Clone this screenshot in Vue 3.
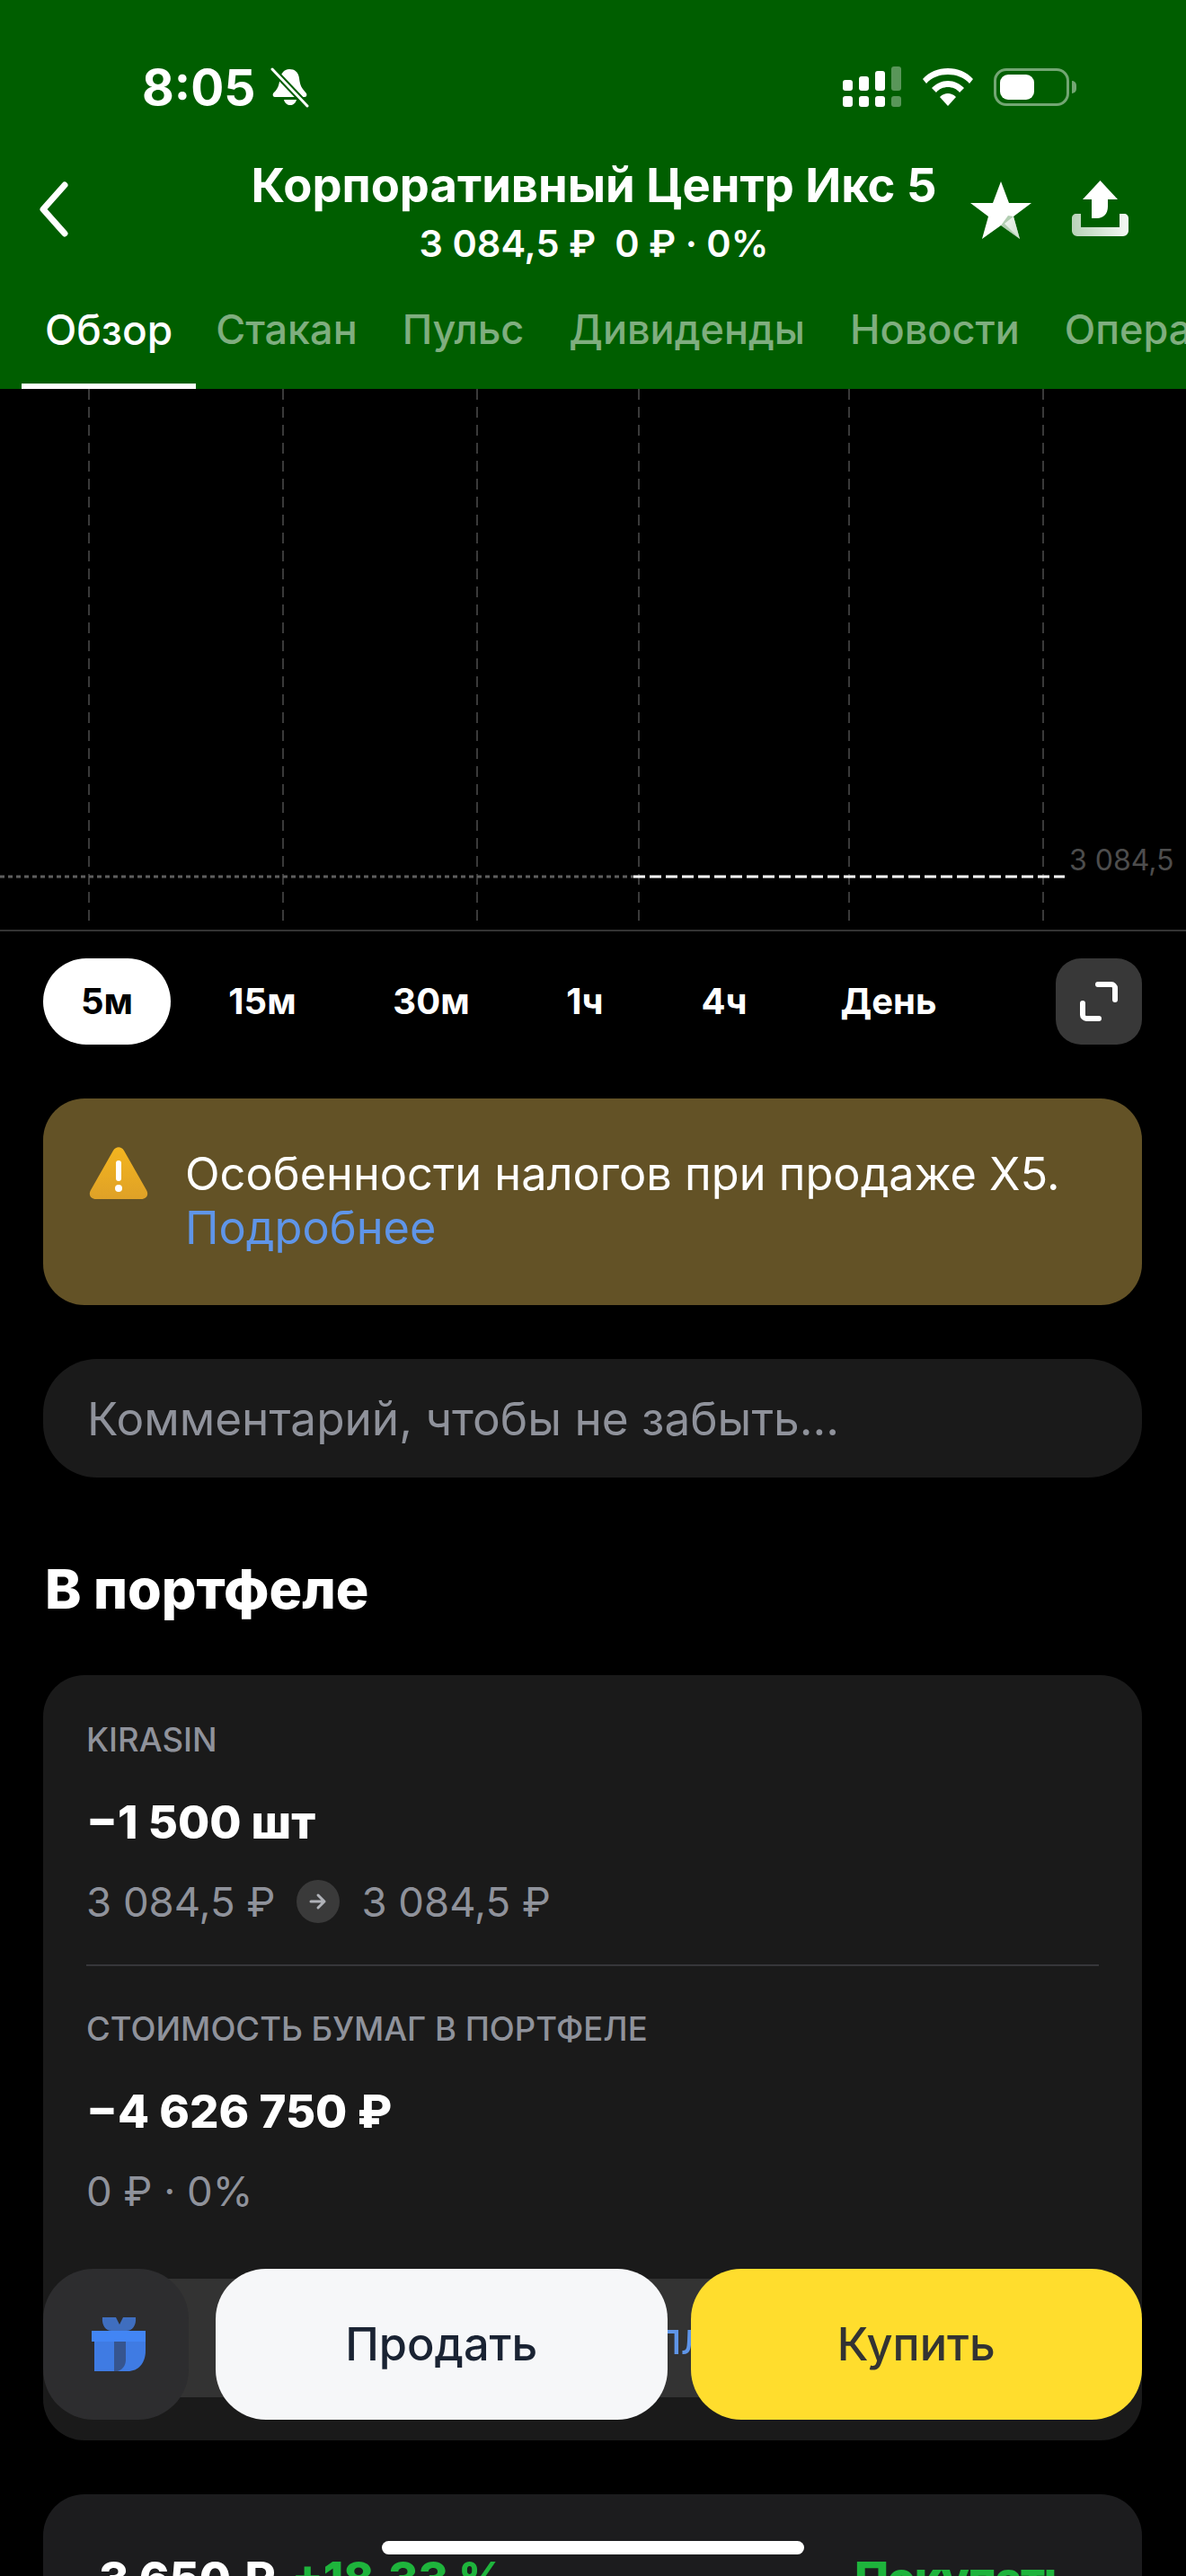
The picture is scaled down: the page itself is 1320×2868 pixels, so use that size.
<template>
  <div class="screen">
    <header class="top">
      <div class="status">
        <div class="status-left">
          <span class="time">8:05</span>
          <svg class="bell" viewBox="0 0 46 46" width="46" height="46">
            <path d="M22 3c6 0 10 3 11 10 1 8 2 10 8 17 1 2 0 4-2 4H6c-2 0-3-2-2-4 4-4 6-7 7-13 1-9 5-14 11-14Z" fill="#fff" />
            <path d="M16 37h14c-1 4-4 6-7 6s-6-2-7-6Z" fill="#fff" />
            <path d="M3 3l39 41" stroke="#005e00" stroke-width="7" />
            <path d="M3 3l39 41" stroke="#fff" stroke-width="3" stroke-linecap="round" />
          </svg>
        </div>
        <div class="status-right">
          <svg viewBox="0 0 66 46" width="66" height="46">
            <g fill="#fff">
              <rect x="0" y="15" width="11" height="12" rx="3" />
              <rect x="18" y="11" width="11" height="16" rx="3" />
              <rect x="36" y="5" width="11" height="22" rx="3" />
              <rect x="0" y="33" width="11" height="12" rx="3" />
              <rect x="18" y="33" width="11" height="12" rx="3" />
              <rect x="36" y="33" width="11" height="12" rx="3" />
            </g>
            <g fill="#fff" opacity="0.35">
              <rect x="54" y="0" width="11" height="27" rx="3" />
              <rect x="54" y="33" width="11" height="12" rx="3" />
            </g>
          </svg>
          <svg viewBox="0 0 58 44" width="58" height="44">
            <path d="M29 1c11 0 21 4 28 12l-4 5C47 11 38 8 29 8S11 11 5 18l-4-5C8 5 18 1 29 1Z" fill="#fff" />
            <path d="M29 15c7 0 13 3 18 8l-5 5c-3-4-8-6-13-6s-10 2-13 6l-5-5c5-5 11-8 18-8Z" fill="#fff" />
            <path d="M29 29c3 0 6 1 9 4l-9 10-9-10c3-3 6-4 9-4Z" fill="#fff" />
          </svg>
          <div class="battery">
            <div class="battery-body"><div class="battery-fill"></div></div>
            <div class="battery-cap"></div>
          </div>
        </div>
      </div>

      <div class="nav">
        <svg class="back" viewBox="0 0 36 62" width="36" height="62">
          <path d="M30 4 6 31l24 27" fill="none" stroke="#fff" stroke-width="7" stroke-linecap="round" stroke-linejoin="round" />
        </svg>
        <div class="nav-title">
          <div class="name">Корпоративный Центр Икс 5</div>
          <div class="quote">3 084,5 ₽&nbsp;&nbsp;0 ₽ · 0%</div>
        </div>
        <svg class="star" viewBox="0 0 68 64" width="68" height="64">
          <defs>
            <linearGradient id="starShade" x1="0" y1="0" x2="1" y2="1">
              <stop offset="0" stop-color="#fff" stop-opacity="0.85" />
              <stop offset="1" stop-color="#fff" stop-opacity="0.35" />
            </linearGradient>
          </defs>
          <path d="M34 0l9 24h25L48 39l7 25-21-15-21 15 7-25L0 24h25Z" fill="#fff" />
          <path d="M34 49l21 15-7-25-6-1Z" fill="#005e00" opacity="0.3" />
          <path d="M38 47l17 17-7-25Z" fill="url(#starShade)" />
        </svg>
        <svg class="share" viewBox="0 0 63 62" width="63" height="62">
          <defs>
            <linearGradient id="trayShade" x1="0" y1="0" x2="1" y2="0">
              <stop offset="0" stop-color="#fff" stop-opacity="0.72" />
              <stop offset="1" stop-color="#fff" stop-opacity="0.96" />
            </linearGradient>
          </defs>
          <path d="M31.5 0 51 21H40v8c0 8-5 13-12 13h-6V21H12Z" fill="#fff" />
          <path d="M0 42c0-3 2-5 5-5h5v15h43V37h5c3 0 5 2 5 5v14c0 3-3 6-6 6H6c-3 0-6-3-6-6Z" fill="url(#trayShade)" />
        </svg>
      </div>

      <nav class="tabs">
        <span v-for="(tab, i) in tabs" :key="tab" class="tab" :class="{ active: i === 0 }">{{ tab }}</span>
      </nav>
    </header>

    <section class="chart">
      <svg class="chart-lines" viewBox="0 0 1320 602" width="1320" height="602">
        <path
          v-for="x in gridX"
          :key="x"
          :d="`M${x} 0V597`"
          stroke="#3a3a3a"
          stroke-width="2"
          stroke-dasharray="12 8"
        />
        <path d="M0 543H705" stroke="#5e5e5e" stroke-width="3" stroke-dasharray="5 4" />
        <path d="M705 543H1185" stroke="#fff" stroke-width="3" stroke-dasharray="13 5" />
      </svg>
      <span class="chart-price">3 084,5</span>
    </section>

    <div class="periods">
      <span v-for="(p, i) in periods" :key="p.label" class="period" :class="{ active: i === 0 }" :style="{ width: p.width + 'px' }">{{ p.label }}</span>
      <div class="expand">
        <svg viewBox="0 0 44 44" width="44" height="44">
          <path d="M21 3h15c2 0 4 2 4 4v13M4 24v13c0 2 2 4 4 4h14" fill="none" stroke="#fff" stroke-width="6" stroke-linecap="round" />
        </svg>
      </div>
    </div>

    <div class="notice">
      <svg class="warn" viewBox="0 0 66 58" width="66" height="58">
        <defs>
          <linearGradient id="warnFill" x1="0" y1="0" x2="0" y2="1">
            <stop offset="0" stop-color="#f3b51f" />
            <stop offset="1" stop-color="#dfa127" />
          </linearGradient>
        </defs>
        <path d="M27 4c3-5 9-5 12 0l25 44c3 5 0 10-6 10H8c-6 0-9-5-6-10Z" fill="url(#warnFill)" />
        <rect x="30" y="15" width="6" height="23" rx="3" fill="#fff" />
        <circle cx="33" cy="46" r="4" fill="#fff" />
      </svg>
      <p class="notice-text">Особенности налогов при продаже Х5.<br /><span class="link">Подробнее</span></p>
    </div>

    <div class="comment">Комментарий, чтобы не забыть...</div>

    <h2 class="section-title">В портфеле</h2>

    <div class="card position">
      <div class="label">KIRASIN</div>
      <div class="big">−1 500 шт</div>
      <div class="prices">
        <span>3 084,5 ₽</span>
        <span class="arrow">
          <svg viewBox="0 0 24 24" width="24" height="24">
            <path d="M4 12h15M12 5l7 7-7 7" fill="none" stroke="#b0b2b8" stroke-width="3" stroke-linecap="round" stroke-linejoin="round" />
          </svg>
        </span>
        <span>3 084,5 ₽</span>
      </div>
      <div class="divider"></div>
      <div class="label">СТОИМОСТЬ БУМАГ В ПОРТФЕЛЕ</div>
      <div class="big">−4 626 750 ₽</div>
      <div class="prices">0 ₽ · 0%</div>
      <div class="under-btn"><span>Заявка и оплата</span></div>
    </div>

    <div class="card forecast">
      <span class="fc-price">3 650 ₽</span>
      <span class="fc-change">+18,33 %</span>
      <span class="fc-action">Покупать</span>
    </div>

    <div class="actions">
      <div class="gift">
        <svg viewBox="0 0 60 60" width="60" height="60">
          <path d="M12 0h15l4 8 4-8h14c1 9-4 15-10 15H22C16 15 11 9 12 0Z" fill="#3f6ebf" />
          <path d="M3 27h57v10c0 14-8 23-20 23H3Z" fill="#3f7be3" />
          <path d="M25 27h13v20c0 6-3 11-9 13h-4Z" fill="#36558f" />
          <rect x="0" y="15" width="60" height="12" fill="#4285f4" />
        </svg>
      </div>
      <div class="btn sell">Продать</div>
      <div class="btn buy">Купить</div>
    </div>

    <div class="home-bar"></div>
  </div>
</template>

<script setup>
const tabs = ['Обзор', 'Стакан', 'Пульс', 'Дивиденды', 'Новости', 'Операции']
const gridX = [99, 315, 531, 711, 945, 1161]
const periods = [
  { label: '5м', width: 142 },
  { label: '15м', width: 204 },
  { label: '30м', width: 172 },
  { label: '1ч', width: 170 },
  { label: '4ч', width: 140 },
  { label: 'День', width: 226 },
]
</script>

<style>
html, body {
  margin: 0;
  background: #000;
}
</style>

<style scoped>
.screen {
  position: relative;
  width: 1320px;
  height: 2868px;
  overflow: hidden;
  background: #000;
  color: #fff;
  font-family: Inter, "Liberation Sans", sans-serif;
}
.top {
  height: 433px;
  box-sizing: border-box;
  background: #005e00;
  padding-top: 73px;
}
.status {
  display: flex;
  justify-content: space-between;
  align-items: center;
  height: 48px;
  padding: 0 122px 0 158px;
}
.status-left {
  display: flex;
  align-items: center;
  gap: 16px;
}
.time {
  font-size: 55px;
  line-height: 48px;
  font-weight: 700;
}
.status-right {
  display: flex;
  align-items: center;
  gap: 22px;
}
.battery {
  display: flex;
  align-items: center;
  gap: 3px;
}
.battery-body {
  width: 84px;
  height: 42px;
  box-sizing: border-box;
  border: 3px solid rgba(255, 255, 255, 0.45);
  border-radius: 14px;
  padding: 4px;
}
.battery-fill {
  width: 38px;
  height: 100%;
  background: #fff;
  border-radius: 9px;
}
.battery-cap {
  width: 5px;
  height: 14px;
  background: rgba(255, 255, 255, 0.45);
  border-radius: 0 6px 6px 0;
}
.nav {
  display: flex;
  align-items: flex-start;
  height: 112px;
  margin-top: 56px;
  padding-left: 42px;
}
.back {
  margin-top: 25px;
  flex-shrink: 0;
}
.nav-title {
  width: 800px;
  margin-left: 183px;
  text-align: center;
  flex-shrink: 0;
}
.name {
  font-size: 52.5px;
  line-height: 58px;
  font-weight: 700;
  white-space: nowrap;
}
.quote {
  font-size: 41.5px;
  line-height: 48px;
  font-weight: 600;
  margin-top: 12px;
  white-space: pre;
}
.star {
  margin: 25px 0 0 19px;
  flex-shrink: 0;
}
.share {
  margin: 24px 0 0 45px;
  flex-shrink: 0;
}
.tabs {
  display: flex;
  margin-top: 48px;
  padding-left: 24px;
  white-space: nowrap;
  overflow: hidden;
}
.tab {
  padding: 0 25px;
  font-size: 45px;
  line-height: 60px;
  height: 96px;
  box-sizing: border-box;
  color: rgba(255, 255, 255, 0.5);
  font-weight: 500;
}
.tab.active {
  color: #fff;
  font-size: 46px;
  border-bottom: 6px solid #fff;
  padding: 0 26px;
  margin-right: -3px;
}
.chart {
  position: relative;
  height: 602px;
  border-bottom: 2px solid #333;
  box-sizing: content-box;
}
.chart-lines {
  display: block;
}
.chart-price {
  position: absolute;
  left: 1190px;
  top: 507px;
  font-size: 32px;
  line-height: 36px;
  color: #4d4d4d;
  white-space: nowrap;
}
.periods {
  display: flex;
  align-items: center;
  height: 96px;
  margin-top: 30px;
  padding: 0 49px 0 48px;
}
.period {
  height: 96px;
  line-height: 96px;
  text-align: center;
  font-size: 40px;
  font-weight: 700;
  flex-shrink: 0;
}
.period.active {
  background: #fff;
  color: #000;
  border-radius: 48px;
}
.expand {
  margin-left: auto;
  width: 96px;
  height: 96px;
  flex-shrink: 0;
  border-radius: 28px;
  background: #383838;
  display: flex;
  align-items: center;
  justify-content: center;
}
.notice {
  display: flex;
  align-items: flex-start;
  height: 230px;
  box-sizing: border-box;
  margin: 60px 49px 0 48px;
  padding: 54px 0 0 51px;
  background: #635226;
  border-radius: 46px;
}
.warn {
  flex-shrink: 0;
}
.notice-text {
  margin: 0 0 0 41px;
  font-size: 50.5px;
  line-height: 60px;
  white-space: nowrap;
}
.link {
  color: #5f95e8;
}
.comment {
  height: 132px;
  line-height: 132px;
  margin: 60px 49px 0 48px;
  padding-left: 49px;
  background: #1a1a1a;
  border-radius: 60px;
  font-size: 51.3px;
  color: #8f929b;
}
.section-title {
  margin: 89px 0 0 50px;
  font-size: 61px;
  line-height: 70px;
  font-weight: 800;
}
.card {
  margin: 0 49px 0 48px;
  background: #1a1a1a;
  border-radius: 46px;
}
.position {
  position: relative;
  height: 852px;
  box-sizing: border-box;
  margin-top: 61px;
  padding: 58px 48px 0 48px;
}
.label {
  font-size: 36.5px;
  line-height: 28px;
  color: #8f929b;
  font-weight: 500;
}
.big {
  margin-top: 50px;
  font-size: 51px;
  line-height: 56px;
  font-weight: 800;
}
.prices {
  display: flex;
  align-items: center;
  gap: 24px;
  height: 48px;
  margin-top: 36px;
  font-size: 45.5px;
  color: #8f929b;
}
.arrow {
  width: 48px;
  height: 48px;
  border-radius: 50%;
  background: #3a3a3a;
  display: flex;
  align-items: center;
  justify-content: center;
}
.divider {
  height: 2px;
  background: #36363a;
  margin: 46px 0 56px 0;
}
.under-btn {
  position: absolute;
  left: 50px;
  right: 48px;
  bottom: 48px;
  box-sizing: border-box;
  padding-left: 18px;
  height: 132px;
  line-height: 132px;
  background: #333;
  border-radius: 44px;
  text-align: center;
  font-size: 50px;
  color: #5f95e8;
}
.forecast {
  position: relative;
  display: flex;
  align-items: baseline;
  height: 200px;
  margin-top: 60px;
  padding: 63px 80px 0 62px;
  box-sizing: border-box;
  font-size: 51px;
  font-weight: 800;
  background: #1c1c1e;
}
.fc-change {
  margin-left: 18px;
  color: #1eb43c;
}
.fc-action {
  margin-left: auto;
  letter-spacing: -1.5px;
  color: #1eb43c;
}
.actions {
  position: absolute;
  left: 48px;
  top: 2526px;
  width: 1223px;
  height: 168px;
  display: flex;
}
.gift {
  width: 162px;
  box-sizing: border-box;
  padding-left: 6px;
  flex-shrink: 0;
  border-radius: 56px;
  background: #2d2d2f;
  display: flex;
  align-items: center;
  justify-content: center;
}
.btn {
  flex: 1;
  border-radius: 56px;
  font-size: 50.5px;
  font-weight: 500;
  line-height: 168px;
  text-align: center;
}
.sell {
  margin-left: 30px;
  background: #f6f7f9;
  color: #1a2333;
}
.buy {
  margin-left: 26px;
  background: #ffdd2d;
  color: #333;
}
.home-bar {
  position: absolute;
  left: 425px;
  top: 2829px;
  width: 470px;
  height: 15px;
  border-radius: 8px;
  background: #fff;
}
</style>
